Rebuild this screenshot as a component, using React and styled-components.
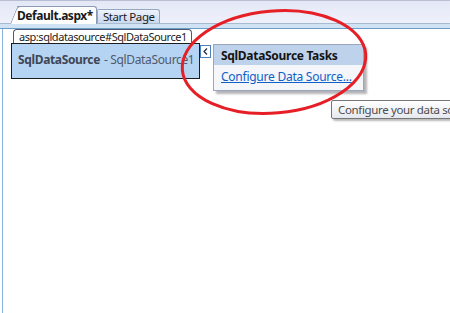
import React from "react";
import styled, { createGlobalStyle } from "styled-components";

const GlobalStyle = createGlobalStyle`
  html, body {
    margin: 0;
    padding: 0;
    background: #ffffff;
  }
  body {
    font-family: "Noto Sans", "Open Sans", sans-serif;
    font-size: 12px;
    overflow: hidden;
  }
`;

const Window = styled.div`
  position: relative;
  width: 450px;
  height: 313px;
  overflow: hidden;
  display: flex;
  flex-direction: column;
`;

const TabStrip = styled.div`
  height: 23px;
  display: flex;
  align-items: flex-end;
  padding-left: 17px;
  background: linear-gradient(#e4e8f6, #eef1fb);
  border-top: 1px solid #b8bfd2;
  box-sizing: border-box;
`;

const Tab = styled.div`
  position: relative;
  box-sizing: border-box;
  height: ${(p) => (p.$active ? "18px" : "14px")};
  margin-bottom: ${(p) => (p.$active ? "-1px" : "0")};
  padding: ${(p) => (p.$active ? "0 3px 0 0" : "0 4px 0 5px")};
  display: flex;
  align-items: center;
  font-weight: ${(p) => (p.$active ? 700 : 400)};
  font-size: ${(p) => (p.$active ? "12px" : "11.5px")};
  letter-spacing: ${(p) => (p.$active ? "-0.45px" : "-0.4px")};
  color: #1a1a1a;
  background: ${(p) =>
    p.$active ? "#ffffff" : "linear-gradient(#eef3fc, #cad9ef)"};
  border: 1px solid ${(p) => (p.$active ? "#8b9bb3" : "#94a6c0")};
  border-bottom: none;
  border-left: ${(p) => (p.$active ? "none" : "1px solid #94a6c0")};
  border-radius: ${(p) => (p.$active ? "0 3px 0 0" : "2px 3px 0 0")};
  z-index: ${(p) => (p.$active ? 2 : 1)};

  &::before {
    content: "";
    display: ${(p) => (p.$active ? "block" : "none")};
    position: absolute;
    left: -7px;
    top: -1px;
    bottom: 0;
    width: 12px;
    background: #ffffff;
    border-left: 1px solid #8b9bb3;
    border-top: 1px solid #8b9bb3;
    border-top-left-radius: 4px;
    transform: skewX(-22deg);
    transform-origin: bottom left;
    z-index: -1;
  }
`;

const TabLabel = styled.span`
  position: relative;
  line-height: 14px;
`;

const Band = styled.div`
  height: 4px;
  background: #cfe3f5;
  border-top: 1px solid #a9bccf;
  border-bottom: 1px solid #6d9cc4;
`;

const Surface = styled.div`
  flex: 1;
  margin-left: 2px;
  border-left: 1px solid #89b4de;
  padding-left: 8px;
  background: #ffffff;
`;

const ControlRow = styled.div`
  display: flex;
  align-items: flex-start;
`;

const ControlColumn = styled.div`
  display: flex;
  flex-direction: column;
  align-items: flex-start;
`;

const TagLabel = styled.div`
  margin-left: 2px;
  height: 13px;
  padding: 0 4px 0 5px;
  display: flex;
  align-items: center;
  background: #ffffff;
  border: 1px solid #4c5a72;
  border-bottom: none;
  border-radius: 4px 4px 0 0;
  font-size: 11px;
  letter-spacing: -0.45px;
  color: #1c1c1c;
  line-height: 13px;
  white-space: nowrap;
`;

const ControlBox = styled.div`
  width: 189px;
  height: 36px;
  box-sizing: border-box;
  border: 1px solid #1c1c1c;
  background: #b5d4f3;
  display: flex;
  align-items: center;
  padding: 0 0 4px 6px;
  font-size: 12px;
  letter-spacing: -0.35px;
  color: #505a6c;
  white-space: nowrap;
`;

const ControlName = styled.span`
  font-weight: 700;
  color: #3f4656;
  margin-right: 4px;
`;

const SmartTag = styled.div`
  width: 11px;
  height: 13px;
  margin-top: 16px;
  box-sizing: border-box;
  border: 1px solid #4e7fc0;
  background: #ffffff;
  display: flex;
  align-items: center;
  justify-content: center;
  color: #1c2a44;
`;

const TasksPanel = styled.div`
  width: 149px;
  margin-top: 15px;
  margin-left: 2px;
  border: 1px solid #9aa6bc;
  background: #f4f6fa;
  box-shadow: 3px 3px 2px rgba(90, 90, 100, 0.45);
`;

const TasksHeader = styled.div`
  height: 20px;
  padding-left: 7px;
  display: flex;
  align-items: center;
  font-weight: 700;
  font-size: 12px;
  letter-spacing: -0.3px;
  color: #141414;
  background: #bfd2ec;
`;

const TaskLink = styled.a`
  display: block;
  padding: 4px 0 6px 7px;
  font-size: 12px;
  letter-spacing: -0.25px;
  color: #1060c8;
  text-decoration: underline;
  line-height: 15px;
`;

const Tooltip = styled.div`
  position: absolute;
  left: 331px;
  top: 100px;
  height: 19px;
  padding: 0 6px;
  box-sizing: border-box;
  display: flex;
  align-items: center;
  white-space: nowrap;
  font-size: 11.5px;
  letter-spacing: -0.35px;
  color: #4c4c4c;
  background: linear-gradient(#ffffff, #e6e8f0);
  border: 1px solid #767676;
  border-radius: 2px;
  box-shadow: 2px 2px 2px rgba(80, 80, 80, 0.4);
`;

const Annotation = styled.svg`
  position: absolute;
  left: 0;
  top: 0;
  pointer-events: none;
`;

export default function App() {
  return (
    <Window>
      <GlobalStyle />
      <TabStrip>
        <Tab $active>
          <TabLabel>Default.aspx*</TabLabel>
        </Tab>
        <Tab>
          <TabLabel>Start Page</TabLabel>
        </Tab>
      </TabStrip>
      <Band />
      <Surface>
        <ControlRow>
          <ControlColumn>
            <TagLabel>asp:sqldatasource#SqlDataSource1</TagLabel>
            <ControlBox>
              <ControlName>SqlDataSource</ControlName>- SqlDataSource1
            </ControlBox>
          </ControlColumn>
          <SmartTag>
            <svg width="5" height="7" viewBox="0 0 5 7">
              <path d="M4 0.5 L1 3.5 L4 6.5" fill="none" stroke="#1c2a44" strokeWidth="1.2" />
            </svg>
          </SmartTag>
          <TasksPanel>
            <TasksHeader>SqlDataSource Tasks</TasksHeader>
            <TaskLink href="#">Configure Data Source...</TaskLink>
          </TasksPanel>
        </ControlRow>
      </Surface>
      <Tooltip>Configure your data source</Tooltip>
      <Annotation width="450" height="313" viewBox="0 0 450 313">
        <ellipse
          cx="274"
          cy="62"
          rx="92"
          ry="51"
          transform="rotate(-5 274 62)"
          fill="none"
          stroke="#e61e26"
          strokeWidth="3"
        />
      </Annotation>
    </Window>
  );
}
